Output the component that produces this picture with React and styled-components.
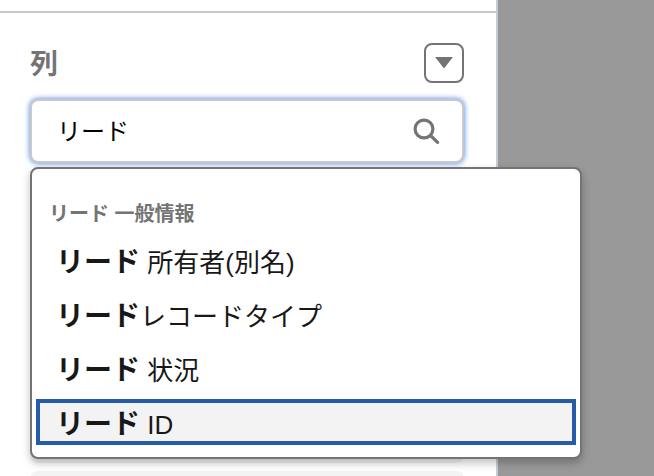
import React, { useState } from "react";
import styled, { createGlobalStyle } from "styled-components";

const fields = [
  { id: "owner", label: " 所有者(別名)" },
  { id: "recordType", label: "レコードタイプ" },
  { id: "status", label: " 状況" },
  { id: "id", label: " ID" },
];

export default function App() {
  const [keyword, setKeyword] = useState("リード");
  const [activeId, setActiveId] = useState("id");

  return (
    <>
      <GlobalStyle />
      <Page>
        <Panel>
          <PanelTop />
          <PanelBody>
            <SectionHeader>
              <Title id="columns-title">列</Title>
              <MenuButton type="button" aria-label="列のメニュー">
                <svg width="18" height="12" viewBox="0 0 18 12">
                  <path d="M0 0h18L9 11.5z" fill="currentColor" />
                </svg>
              </MenuButton>
            </SectionHeader>
            <Combobox>
              <SearchBox>
                <SearchInput
                  type="text"
                  role="combobox"
                  aria-expanded="true"
                  aria-controls="field-list"
                  aria-labelledby="columns-title"
                  value={keyword}
                  onChange={(e) => setKeyword(e.target.value)}
                />
                <svg width="27" height="27" viewBox="0 0 27 27" aria-hidden="true">
                  <g fill="none" stroke="currentColor" strokeLinecap="round">
                    <circle cx="11" cy="11" r="8.9" strokeWidth="3.2" />
                    <path d="M17.5 17.5L24.6 24.4" strokeWidth="3.2" />
                  </g>
                </svg>
              </SearchBox>
              {/* 候補リスト */}
              <Dropdown>
                <GroupTitle id="group-title">リード 一般情報</GroupTitle>
                <OptionList
                  id="field-list"
                  role="listbox"
                  aria-labelledby="group-title"
                >
                  {fields.map((field) => (
                    <Option
                      key={field.id}
                      role="option"
                      aria-selected={field.id === activeId}
                      $active={field.id === activeId}
                      onClick={() => setActiveId(field.id)}
                    >
                      <Match>リード</Match>
                      {field.label}
                    </Option>
                  ))}
                </OptionList>
              </Dropdown>
            </Combobox>
            {/* 選択済みの列 */}
            <ColumnList>
              {[1, 2, 3, 4, 5, 6].map((n) => (
                <ColumnItem key={n} />
              ))}
            </ColumnList>
          </PanelBody>
        </Panel>
      </Page>
    </>
  );
}

const GlobalStyle = createGlobalStyle`
  * {
    box-sizing: border-box;
  }
  body {
    margin: 0;
    overflow: hidden;
    background: #999999;
    color: #181818;
    font-family: "Liberation Sans", "Noto Sans CJK JP", sans-serif;
  }
`;

const Page = styled.div`
  display: flex;
  height: 100vh;
  overflow: hidden;
`;

const Panel = styled.section`
  flex: 0 1 498px;
  min-width: 0;
  background: white;
  border-right: 2px solid #c0cedb;
`;

const PanelTop = styled.div`
  height: 13px;
  border-bottom: 2px solid #c9c9c9;
`;

const PanelBody = styled.div`
  padding: 30px 32px 0 30px;
`;

const SectionHeader = styled.div`
  display: flex;
  align-items: center;
  justify-content: space-between;
  height: 40px;
`;

const Title = styled.h2`
  margin: 0;
  padding-top: 4px;
  font-size: 28px;
  line-height: 40px;
  color: #747474;
`;

const MenuButton = styled.button`
  display: flex;
  align-items: center;
  justify-content: center;
  width: 40px;
  height: 40px;
  padding: 0;
  border: 2px solid #747474;
  border-radius: 8px;
  background: white;
  color: #747474;
  cursor: pointer;
`;

const Combobox = styled.div`
  position: relative;
  margin-top: 16px;
`;

const SearchBox = styled.div`
  display: flex;
  align-items: center;
  height: 64px;
  padding: 0 22px 0 25px;
  border: 2px solid #c9c9c9;
  border-radius: 8px;
  background: white;
  box-shadow: 0 0 5px 1px #6f9fec;
  color: #747474;
`;

const SearchInput = styled.input`
  flex: 1;
  min-width: 0;
  padding: 0 0 4px;
  border: none;
  outline: none;
  background: transparent;
  font-family: inherit;
  font-size: 24px;
  color: black;
`;

const Dropdown = styled.div`
  position: absolute;
  top: calc(100% + 4px);
  left: 0;
  width: calc(100% + 118px);
  padding: 28px 4px 12px;
  border: 2px solid #747474;
  border-radius: 8px;
  background: white;
  box-shadow: 0 4px 8px rgba(0, 0, 0, 0.25);
`;

const GroupTitle = styled.h3`
  margin: 0 0 6px;
  padding: 0 13px;
  font-size: 20px;
  line-height: 34px;
  color: #747474;
`;

const OptionList = styled.ul`
  display: flex;
  flex-direction: column;
  gap: 8px;
  margin: 0;
  padding: 0;
  list-style: none;
`;

const Option = styled.li`
  height: 46px;
  padding: 0 16px;
  border: 4px solid ${({ $active }) => ($active ? "#265ba5" : "transparent")};
  background: ${({ $active }) => ($active ? "#f3f3f3" : "white")};
  font-size: 26px;
  line-height: 44px;
  white-space: pre;
  cursor: pointer;
`;

const Match = styled.strong`
  font-size: 28px;
`;

const ColumnList = styled.ul`
  display: flex;
  flex-direction: column;
  gap: 8px;
  margin: 0;
  padding: 240px 0 0;
  list-style: none;
`;

const ColumnItem = styled.li`
  flex: none;
  height: 60px;
  border-radius: 8px;
  background: #f3f3f3;
`;
